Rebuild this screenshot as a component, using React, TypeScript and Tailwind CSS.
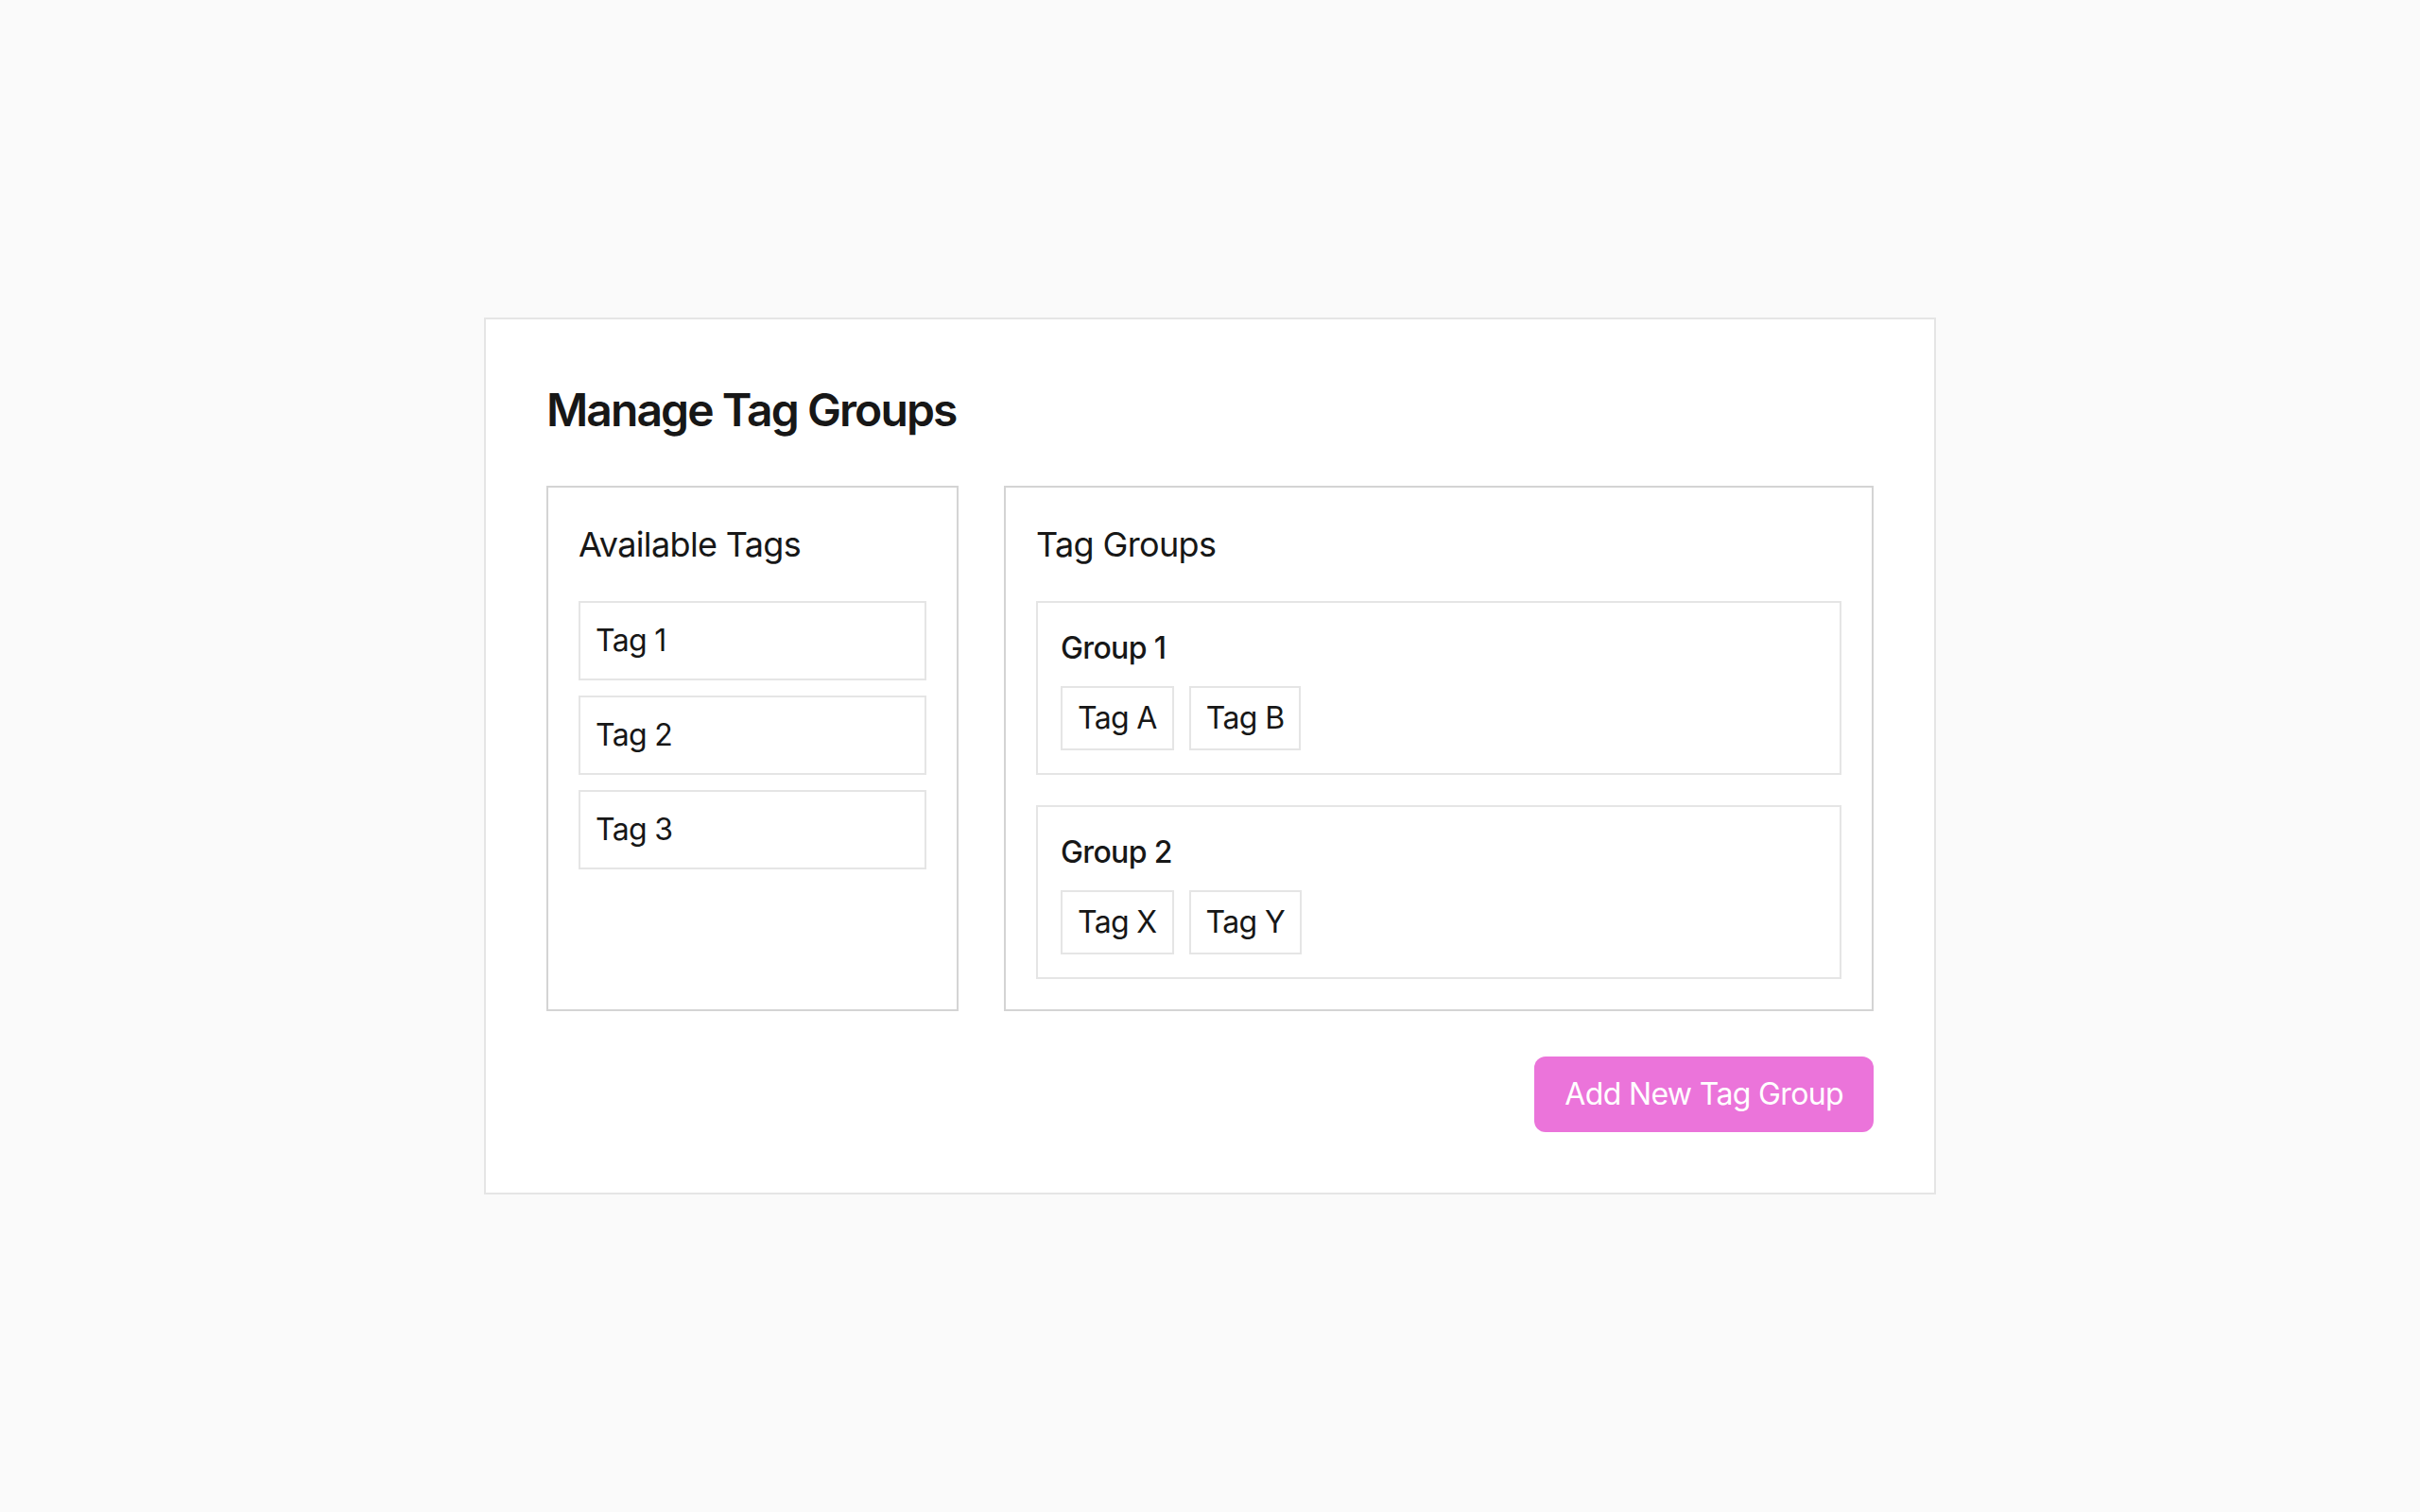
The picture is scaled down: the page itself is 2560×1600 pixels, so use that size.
import React from "react";

const availableTags = ["Tag 1", "Tag 2", "Tag 3"];

const groups = [
  { name: "Group 1", tags: ["Tag A", "Tag B"] },
  { name: "Group 2", tags: ["Tag X", "Tag Y"] },
];

export default function App() {
  return (
    <div className="min-h-screen bg-[#fafafa] flex items-center justify-center font-['Inter',sans-serif] text-[#171717] tracking-[-0.04em]">
      <div className="w-[1536px] bg-white border-2 border-[#e5e5e5] p-16">
        <h1 className="text-[48px] leading-[64px] font-semibold tracking-[-0.04em] mb-12">Manage Tag Groups</h1>

        <div className="grid grid-cols-3 gap-12">
          <div className="border-2 border-[#d4d4d4] p-8">
            <h2 className="text-[36px] leading-[56px] font-normal mb-8">Available Tags</h2>
            <div className="flex flex-col gap-4">
              {availableTags.map((t) => (
                <div key={t} className="border-2 border-[#e5e5e5] p-4 text-[32px] leading-[48px]">
                  {t}
                </div>
              ))}
            </div>
          </div>

          <div className="col-span-2 border-2 border-[#d4d4d4] p-8">
            <h2 className="text-[36px] leading-[56px] font-normal mb-8">Tag Groups</h2>
            <div className="flex flex-col gap-8">
              {groups.map((g) => (
                <div key={g.name} className="border-2 border-[#e5e5e5] p-6">
                  <div className="text-[32px] leading-[48px] font-medium mb-4">{g.name}</div>
                  <div className="flex gap-4">
                    {g.tags.map((t) => (
                      <span key={t} className="border-2 border-[#e5e5e5] px-4 py-2 text-[32px] leading-[48px]">
                        {t}
                      </span>
                    ))}
                  </div>
                </div>
              ))}
            </div>
          </div>
        </div>

        <div className="flex justify-end mt-12">
          <button className="bg-[#eb74da] text-white rounded-xl px-8 py-4 text-[32px] leading-[48px]">
            Add New Tag Group
          </button>
        </div>
      </div>
    </div>
  );
}
